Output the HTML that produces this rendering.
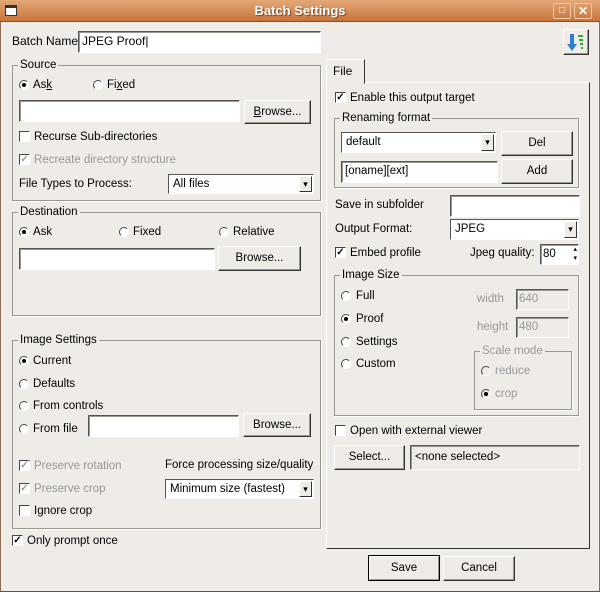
<!DOCTYPE html>
<html><head><meta charset="utf-8"><style>
*{box-sizing:border-box}
body{margin:0;width:600px;height:592px;background:#efebe7;font-family:"Liberation Sans",sans-serif;font-size:11.5px;color:#000;position:relative;overflow:hidden}
.a{position:absolute;white-space:nowrap}
.t{position:absolute;white-space:nowrap;line-height:14px}
.g{color:#999}
.in{position:absolute;background:#fff;border:1px solid;border-color:#555 #fff #fff #555;box-shadow:inset 1px 1px 0 #9a9690}
.dis{background:#efebe7}
.btn{position:absolute;background:#efebe7;border:1px solid;border-color:#fff #333 #333 #fff;box-shadow:inset -1px -1px 0 #9a9690;text-align:center}
.grp{position:absolute;border:1px solid #9a9690;box-shadow:1px 1px 0 #fff}
.lg{position:absolute;top:-8px;left:5px;background:#efebe7;padding:0 2px;line-height:14px}
.cb{position:absolute;width:11px;height:11px;background:#fff;border:1px solid;border-color:#444 #fff #fff #444;font-size:10px;line-height:9px;text-align:center;font-weight:bold}
.rd{position:absolute;width:10px;height:10px;border-radius:50%;background:#fff;border:1px solid;border-color:#444 #fff #fff #444}
.rd.on:after{content:"";position:absolute;left:2px;top:2px;width:4px;height:4px;border-radius:50%;background:#000}
.combo{position:absolute;background:#fff;border:1px solid;border-color:#555 #fff #fff #555;padding-left:4px;line-height:18px}
.arr{position:absolute;right:1px;top:1px;bottom:1px;width:13px;background:#efebe7;border:1px solid;border-color:#fff #333 #333 #fff;font-size:9px;text-align:center;line-height:15px}
</style></head><body>
<div class="a" style="left:0;top:0;width:600px;height:22px;background:linear-gradient(#e4a877,#c8743a);border-bottom:1px solid #8a4d25"></div>
<div class="a" style="left:5px;top:5px;width:12px;height:11px;border:1px solid #333;background:#fff;border-top-width:3px"></div>
<div class="a" style="left:0;top:3px;width:600px;text-align:center;color:#fff;font-weight:bold;font-size:13px;text-shadow:1px 1px 1px #7a4020">Batch Settings</div>
<div class="a" style="left:553px;top:3px;width:18px;height:16px;border:1px solid #f2c7a5;border-radius:2px;color:#fff;text-align:center;font-size:10px;line-height:14px">□</div>
<div class="a" style="left:574px;top:3px;width:18px;height:16px;border:1px solid #f2c7a5;border-radius:2px;color:#fff;text-align:center;font-size:12px;line-height:14px;font-weight:bold">✕</div>
<div class="a" style="left:0;top:22px;width:1px;height:570px;background:#8a6a50"></div>
<div class="a" style="left:599px;top:22px;width:1px;height:570px;background:#8a6a50"></div>
<div class="a" style="left:0;top:591px;width:600px;height:1px;background:#555"></div>

<div class="t" style="left:12px;top:34px;font-size:12px">Batch Name</div>
<div class="in" style="left:78px;top:31px;width:243px;height:22px;font-size:12px;line-height:19px;padding-left:3px">JPEG Proof|</div>
<div class="btn" style="left:563px;top:29px;width:26px;height:26px">
<svg width="22" height="22" viewBox="0 0 22 22" style="margin-top:1px"><path d="M5 3v10H2l5 7 5-7H9V3z" fill="#2a7fd4"/><path d="M13 4h5v2h-5zM14 8h4v2h-4zM15 12h3v2h-3zM16 16h2v2h-2z" fill="#3a3"/></svg></div>

<div class="grp" style="left:12px;top:65px;width:309px;height:136px"><span class="lg">Source</span></div>
<div class="rd on" style="left:19px;top:80px"></div><div class="t" style="left:33px;top:78px">As<u>k</u></div>
<div class="rd" style="left:93px;top:80px"></div><div class="t" style="left:107px;top:78px">Fi<u>x</u>ed</div>
<div class="in" style="left:19px;top:100px;width:221px;height:22px"></div>
<div class="btn" style="left:244px;top:100px;width:67px;height:24px;line-height:22px"><u>B</u>rowse...</div>
<div class="cb" style="left:19px;top:131px"></div><div class="t" style="left:34px;top:130px">Recurse Sub-directories</div>
<div class="cb" style="left:19px;top:154px;color:#999">✓</div><div class="t g" style="left:34px;top:153px">Recreate directory structure</div>
<div class="t" style="left:19px;top:177px">File Types to Process:</div>
<div class="combo" style="left:168px;top:174px;width:146px;height:20px">All files<div class="arr">▾</div></div>

<div class="grp" style="left:12px;top:212px;width:309px;height:104px"><span class="lg">Destination</span></div>
<div class="rd on" style="left:19px;top:227px"></div><div class="t" style="left:33px;top:225px">Ask</div>
<div class="rd" style="left:119px;top:227px"></div><div class="t" style="left:133px;top:225px">Fixed</div>
<div class="rd" style="left:219px;top:227px"></div><div class="t" style="left:233px;top:225px">Relative</div>
<div class="in" style="left:19px;top:248px;width:196px;height:22px"></div>
<div class="btn" style="left:218px;top:246px;width:83px;height:25px;line-height:23px">Browse...</div>

<div class="grp" style="left:12px;top:340px;width:309px;height:189px"><span class="lg">Image Settings</span></div>
<div class="rd on" style="left:19px;top:356px"></div><div class="t" style="left:33px;top:354px">Current</div>
<div class="rd" style="left:19px;top:379px"></div><div class="t" style="left:33px;top:377px">Defaults</div>
<div class="rd" style="left:19px;top:401px"></div><div class="t" style="left:33px;top:399px">From controls</div>
<div class="rd" style="left:19px;top:424px"></div><div class="t" style="left:33px;top:422px">From file</div>
<div class="in" style="left:88px;top:415px;width:151px;height:22px"></div>
<div class="btn" style="left:243px;top:413px;width:68px;height:24px;line-height:22px">Browse...</div>
<div class="cb" style="left:19px;top:460px;color:#999">✓</div><div class="t g" style="left:34px;top:459px">Preserve rotation</div>
<div class="t" style="left:165px;top:458px">Force processing size/quality</div>
<div class="cb" style="left:19px;top:483px;color:#999">✓</div><div class="t g" style="left:34px;top:482px">Preserve crop</div>
<div class="combo" style="left:165px;top:479px;width:149px;height:20px">Minimum size (fastest)<div class="arr">▾</div></div>
<div class="cb" style="left:19px;top:505px"></div><div class="t" style="left:34px;top:504px">Ignore crop</div>
<div class="cb" style="left:12px;top:535px">✓</div><div class="t" style="left:27px;top:534px">Only prompt once</div>

<div class="a" style="left:326px;top:82px;width:264px;height:467px;border:1px solid;border-color:#fff #333 #333 #fff"></div>
<div class="a" style="left:326px;top:59px;width:39px;height:25px;border:1px solid;border-color:#fff #333 transparent #fff;background:#efebe7;padding:4px 0 0 6px;font-size:12px">File</div>
<div class="cb" style="left:335px;top:92px">✓</div><div class="t" style="left:350px;top:91px">Enable this output target</div>
<div class="grp" style="left:334px;top:118px;width:245px;height:70px"><span class="lg">Renaming format</span></div>
<div class="combo" style="left:341px;top:132px;width:155px;height:21px">default<div class="arr">▾</div></div>
<div class="btn" style="left:501px;top:131px;width:72px;height:25px;line-height:23px">Del</div>
<div class="in" style="left:341px;top:161px;width:157px;height:22px;padding-left:3px;line-height:19px">[oname][ext]</div>
<div class="btn" style="left:501px;top:159px;width:72px;height:25px;line-height:23px">Add</div>
<div class="t" style="left:335px;top:198px">Save in subfolder</div>
<div class="in" style="left:450px;top:195px;width:130px;height:22px"></div>
<div class="t" style="left:335px;top:222px">Output Format:</div>
<div class="combo" style="left:450px;top:219px;width:129px;height:21px">JPEG<div class="arr">▾</div></div>
<div class="cb" style="left:335px;top:247px">✓</div><div class="t" style="left:350px;top:246px">Embed profile</div>
<div class="t" style="left:470px;top:246px">Jpeg quality:</div>
<div class="in" style="left:540px;top:244px;width:39px;height:21px;padding-left:2px;line-height:18px">80<span style="position:absolute;right:1px;top:0;font-size:7px;line-height:9px">▴<br>▾</span></div>

<div class="grp" style="left:334px;top:275px;width:245px;height:141px"><span class="lg">Image Size</span></div>
<div class="rd" style="left:341px;top:291px"></div><div class="t" style="left:356px;top:289px">Full</div>
<div class="rd on" style="left:341px;top:314px"></div><div class="t" style="left:356px;top:312px">Proof</div>
<div class="rd" style="left:341px;top:337px"></div><div class="t" style="left:356px;top:335px">Settings</div>
<div class="rd" style="left:341px;top:359px"></div><div class="t" style="left:356px;top:357px">Custom</div>
<div class="t g" style="left:477px;top:292px">width</div>
<div class="in dis" style="left:516px;top:289px;width:53px;height:21px;color:#999;padding-left:2px;line-height:19px">640</div>
<div class="t g" style="left:477px;top:320px">height</div>
<div class="in dis" style="left:516px;top:317px;width:53px;height:21px;color:#999;padding-left:2px;line-height:19px">480</div>
<div class="grp" style="left:474px;top:351px;width:98px;height:59px"><span class="lg g">Scale mode</span></div>
<div class="rd" style="left:481px;top:366px;background:#efebe7"></div><div class="t g" style="left:495px;top:364px">reduce</div>
<div class="rd on" style="left:481px;top:389px;background:#efebe7"></div><div class="t g" style="left:495px;top:387px">crop</div>

<div class="cb" style="left:335px;top:425px"></div><div class="t" style="left:350px;top:424px">Open with external viewer</div>
<div class="btn" style="left:334px;top:445px;width:71px;height:25px;line-height:23px">Select...</div>
<div class="in dis" style="left:410px;top:445px;width:170px;height:25px;padding-left:4px;line-height:22px">&lt;none selected&gt;</div>

<div class="btn" style="left:368px;top:555px;width:72px;height:26px;line-height:24px;border-color:#000;box-shadow:inset 1px 1px 0 #fff,inset -1px -1px 0 #9a9690">Save</div>
<div class="btn" style="left:443px;top:556px;width:72px;height:25px;line-height:23px">Cancel</div>
</body></html>
